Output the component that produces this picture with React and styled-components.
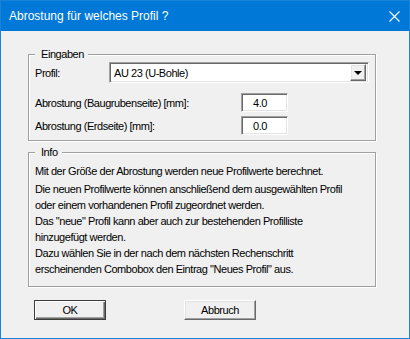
import styled, { createGlobalStyle } from 'styled-components';

const GlobalStyle = createGlobalStyle`
  html, body {
    margin: 0;
    padding: 0;
    background: #f0f0f0;
  }
  * {
    box-sizing: border-box;
  }
`;

const sunken = `
  border: 1px solid;
  border-color: #a0a0a0 #ffffff #ffffff #a0a0a0;
  box-shadow: inset 1px 1px 0 #696969, inset -1px -1px 0 #e3e3e3;
  background: #ffffff;
`;

const raised = `
  border: 1px solid;
  border-color: #ffffff #696969 #696969 #ffffff;
  box-shadow: inset -1px -1px 0 #a0a0a0, inset 1px 1px 0 #e3e3e3;
  background: #f0f0f0;
`;

const Window = styled.div`
  width: 410px;
  height: 339px;
  border: 1px solid #1883d7;
  background: #f0f0f0;
  font-family: 'Liberation Sans', Arial, sans-serif;
  font-size: 11px;
  letter-spacing: -0.45px;
  color: #000;
`;

const TitleBar = styled.div`
  height: 30px;
  background: #0078d7;
  display: flex;
  align-items: center;
  justify-content: space-between;
  padding: 0 9px 0 8px;
`;

const Title = styled.span`
  color: #fff;
  font-size: 12px;
  letter-spacing: 0;
`;

const Body = styled.div`
  padding: 0 0 0 27px;
`;

const Group = styled.div`
  position: relative;
  width: 348px;
  margin-top: ${(p) => p.$mt}px;
  padding: ${(p) => p.$pad};
  border: 1px solid #a0a0a0;
  box-shadow: 1px 1px 0 #fff, inset 1px 1px 0 #fff;
`;

const Legend = styled.span`
  position: absolute;
  top: -8px;
  left: 6px;
  padding: 0 4px 0 6px;
  background: #f0f0f0;
  line-height: 14px;
`;

const Row = styled.div`
  display: flex;
  align-items: center;
  margin-top: ${(p) => p.$mt || 0}px;
`;

const Label = styled.span`
  width: ${(p) => p.$w}px;
  flex: none;
`;

const Combo = styled.div`
  ${sunken}
  width: 260px;
  height: 21px;
  display: flex;
  align-items: center;
  padding: 2px 2px 2px 4px;
`;

const ComboText = styled.span`
  flex: 1;
`;

const DropButton = styled.div`
  ${raised}
  width: 16px;
  height: 17px;
  display: flex;
  align-items: center;
  justify-content: center;
`;

const Arrow = styled.span`
  width: 0;
  height: 0;
  border-left: 4px solid transparent;
  border-right: 4px solid transparent;
  border-top: 4px solid #000;
  margin-top: 1px;
`;

const Field = styled.div`
  ${sunken}
  width: 47px;
  height: 19px;
  padding-left: 11px;
  display: flex;
  align-items: center;
`;

const Text = styled.p`
  margin: 0 0 ${(p) => p.$mb || 0}px;
  line-height: 16px;
`;

const Buttons = styled.div`
  display: flex;
  gap: 78px;
  margin-top: 13px;
  padding-left: 6px;
`;

const Button = styled.div`
  ${raised}
  width: 72px;
  height: 20px;
  display: flex;
  align-items: center;
  justify-content: center;
  ${(p) =>
    p.$default &&
    `
    border-color: #3c3c3c;
    box-shadow: inset 1px 1px 0 #fff, inset -1px -1px 0 #696969, inset -2px -2px 0 #a0a0a0;
  `}
`;

function CloseIcon() {
  return (
    <svg width="11" height="11" viewBox="0 0 11 11">
      <path d="M0.5 0.5 L10.5 10.5 M10.5 0.5 L0.5 10.5" stroke="#fff" strokeWidth="1.1" fill="none" />
    </svg>
  );
}

export default function App() {
  return (
    <>
      <GlobalStyle />
      <Window>
        <TitleBar>
          <Title>Abrostung für welches Profil ?</Title>
          <CloseIcon />
        </TitleBar>
        <Body>
          <Group $mt={23} $pad="7px 6px 5px 6px">
            <Legend>Eingaben</Legend>
            <Row>
              <Label $w={74}>Profil:</Label>
              <Combo>
                <ComboText>AU 23 (U-Bohle)</ComboText>
                <DropButton>
                  <Arrow />
                </DropButton>
              </Combo>
            </Row>
            <Row $mt={10}>
              <Label $w={206}>Abrostung (Baugrubenseite) [mm]:</Label>
              <Field>4.0</Field>
            </Row>
            <Row $mt={4}>
              <Label $w={206}>Abrostung (Erdseite) [mm]:</Label>
              <Field>0.0</Field>
            </Row>
          </Group>
          <Group $mt={11} $pad="10px 6px 9px 6px">
            <Legend>Info</Legend>
            <Text $mb={2}>Mit der Größe der Abrostung werden neue Profilwerte berechnet.</Text>
            <Text>Die neuen Profilwerte können anschließend dem ausgewählten Profil</Text>
            <Text>oder einem vorhandenen Profil zugeordnet werden.</Text>
            <Text>Das "neue" Profil kann aber auch zur bestehenden Profilliste</Text>
            <Text>hinzugefügt werden.</Text>
            <Text>Dazu wählen Sie in der nach dem nächsten Rechenschritt</Text>
            <Text>erscheinenden Combobox den Eintrag "Neues Profil" aus.</Text>
          </Group>
          <Buttons>
            <Button $default>OK</Button>
            <Button>Abbruch</Button>
          </Buttons>
        </Body>
      </Window>
    </>
  );
}
